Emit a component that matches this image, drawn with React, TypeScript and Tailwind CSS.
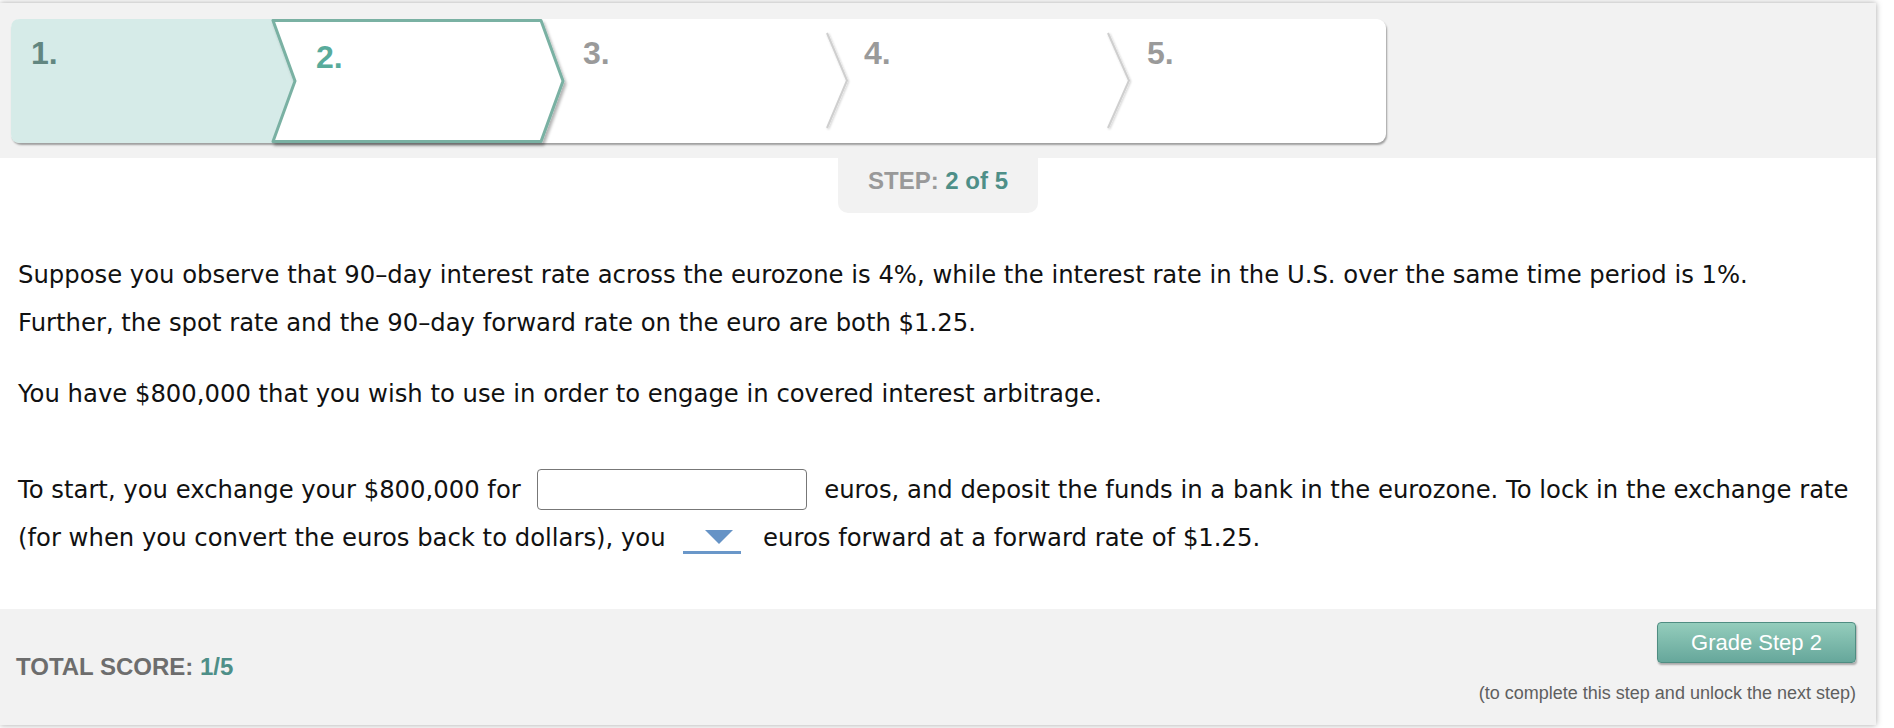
import React from 'react';

const sans = "font-['Liberation_Sans',Arial,sans-serif]";

function Stepper() {
  const labels = [
    { n: '1.', cls: 'w-[284px] pl-[20px] pt-[18px] text-[#628680]' },
    { n: '2.', cls: 'w-[268px] pl-[21px] pt-[22px] text-[#58ab9b]' },
    { n: '3.', cls: 'w-[284px] pl-[20px] pt-[18px] text-[#9a9a9a]' },
    { n: '4.', cls: 'w-[282px] pl-[17px] pt-[18px] text-[#9a9a9a]' },
    { n: '5.', cls: 'flex-1 pl-[18px] pt-[18px] text-[#9a9a9a]' },
  ];

  return (
    <div className="relative h-[124px] w-[1375px] rounded-[9px] bg-white shadow-[1px_2px_2px_rgba(0,0,0,0.35)]">
      <svg className="absolute inset-0 overflow-visible" width="1375" height="124" viewBox="0 0 1375 124">
        <defs>
          <filter id="sh" x="-10%" y="-10%" width="130%" height="140%">
            <feDropShadow dx="2" dy="3" stdDeviation="1.5" floodColor="#000" floodOpacity="0.3" />
          </filter>
          <filter id="sep" x="-50%" y="-10%" width="200%" height="130%">
            <feDropShadow dx="1" dy="1" stdDeviation="0.8" floodColor="#000" floodOpacity="0.2" />
          </filter>
        </defs>
        <path d="M9 0 H262 L284 62 L262 124 H9 Q0 124 0 115 V9 Q0 0 9 0 Z" fill="#d6ebe8" />
        <polygon
          points="262,1.5 530,1.5 552,62 530,122.5 262,122.5 284,62"
          fill="#fff"
          stroke="#7ab1a3"
          strokeWidth="3"
          strokeLinejoin="round"
          filter="url(#sh)"
        />
        <polyline points="816,14 836,61.5 816,109" fill="none" stroke="#cfcfcf" strokeWidth="2" filter="url(#sep)" />
        <polyline points="1097,14 1118,61.5 1097,109" fill="none" stroke="#cfcfcf" strokeWidth="2" filter="url(#sep)" />
      </svg>
      <div className={`relative flex h-full ${sans} text-[32px] font-bold leading-none`}>
        {labels.map((l) => (
          <div key={l.n} className={l.cls}>
            {l.n}
          </div>
        ))}
      </div>
    </div>
  );
}

export default function App() {
  return (
    <div className="min-h-screen bg-white">
      <div className="mt-[3px] h-[722px] w-[1876px] bg-white shadow-[0_0_6px_rgba(0,0,0,0.35)]">
        <div className="h-[155px] bg-[#f2f2f2] pl-[11px] pt-[16px]">
          <Stepper />
        </div>

        <div className="flex justify-center">
          <div className={`h-[55px] w-[200px] rounded-b-[10px] bg-[#f2f2f2] pt-[11px] text-center ${sans} text-[24px] font-bold leading-none`}>
            <span className="text-[#999999]">STEP: </span>
            <span className="text-[#4e8f88]">2 of 5</span>
          </div>
        </div>

        <div className="px-[18px] pt-[38px] font-['DejaVu_Sans',Verdana,sans-serif] text-[24.3px] leading-[48px] text-[#111]">
          <p>
            Suppose you observe that 90–day interest rate across the eurozone is 4%, while the interest rate in the U.S.
            over the same time period is 1%.
            <br />
            Further, the spot rate and the 90–day forward rate on the euro are both $1.25.
          </p>
          <p className="mt-[23px]">You have $800,000 that you wish to use in order to engage in covered interest arbitrage.</p>
          <p className="mt-[48px]">
            To start, you exchange your $800,000 for{' '}
            <span className="mx-[9px] inline-block h-[41px] w-[270px] rounded-[4px] border-[1.5px] border-[#777] bg-white align-[-12px]" />{' '}
            euros, and deposit the funds in a bank in the eurozone. To lock in the exchange rate
            <br />
            (for when you convert the euros back to dollars), you{' '}
            <span className="ml-[10px] mr-[14px] inline-block h-[24px] w-[58px] overflow-hidden border-b-[3px] border-[#6a97c9] pl-[22px] align-[-8px]">
              <svg className="block" width="28" height="14" viewBox="0 0 28 14">
                <polygon points="0,0 28,0 14,14" fill="#6693c6" />
              </svg>
            </span>{' '}
            euros forward at a forward rate of $1.25.
          </p>
        </div>

        <div className={`mt-[47px] flex h-[116px] justify-between bg-[#f2f2f2] pl-[16px] pr-[20px] ${sans}`}>
          <div className="pt-[46px] text-[24px] font-bold leading-none">
            <span className="text-[#6d6d6d]">TOTAL SCORE: </span>
            <span className="text-[#4e8f88]">1/5</span>
          </div>
          <div className="flex flex-col items-end pt-[13px]">
            <button className="flex h-[41px] w-[199px] items-center justify-center rounded-[4px] border border-[#4f8d82] bg-gradient-to-b from-[#94cdbc] to-[#66a79b] text-[22px] leading-none text-white shadow-[1px_2px_2px_rgba(0,0,0,0.3)]">
              Grade Step 2
            </button>
            <div className="mt-[21px] text-[18px] leading-none text-[#5f5f5f]">
              (to complete this step and unlock the next step)
            </div>
          </div>
        </div>
      </div>
    </div>
  );
}
